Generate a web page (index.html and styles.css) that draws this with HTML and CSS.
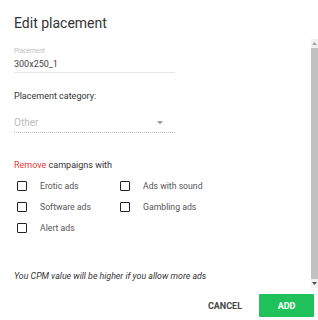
FILE: index.html
```html
<!DOCTYPE html>
<html>
<head>
<meta charset="utf-8">
<link rel="stylesheet" href="styles.css">
</head>
<body>
<div class="dialog">
  <h1 class="title">Edit placement</h1>
  <div class="body">
    <div class="inner">
      <div class="field">
        <div class="field-label">Placement</div>
        <div class="field-value">300x250_1</div>
      </div>
      <div class="section-label">Placement category:</div>
      <div class="select">
        <span>Other</span>
        <svg class="caret" width="6" height="4" viewBox="0 0 6 4"><path d="M0 0h6L3 3.5z" fill="#9e9e9e"/></svg>
      </div>
      <div class="remove"><span class="red">Remove</span> campaigns with</div>
      <div class="checks">
        <label class="check"><span class="box"></span>Erotic ads</label>
        <label class="check"><span class="box"></span>Ads with sound</label>
        <label class="check"><span class="box"></span>Software ads</label>
        <label class="check"><span class="box"></span>Gambling ads</label>
        <label class="check"><span class="box"></span>Alert ads</label>
      </div>
      <p class="note">You CPM value will be higher if you allow more ads</p>
    </div>
    <div class="scrollbar">
      <div class="sb-btn">
        <svg width="5" height="3" viewBox="0 0 5 3"><path d="M0 3h5L2.5 0z" fill="#a3a3a3"/></svg>
      </div>
      <div class="sb-thumb"></div>
      <div class="sb-btn">
        <svg width="5" height="3" viewBox="0 0 5 3"><path d="M0 0h5L2.5 3z" fill="#505050"/></svg>
      </div>
    </div>
  </div>
  <div class="actions">
    <button class="btn btn-text">CANCEL</button>
    <button class="btn btn-primary">ADD</button>
  </div>
</div>
</body>
</html>
```
FILE: styles.css
```css
html, body {
  margin: 0;
  padding: 0;
  background: #fff;
}
body {
  font-family: Roboto, "Liberation Sans", sans-serif;
  color: #333;
  width: 318px;
  height: 320px;
  overflow: hidden;
}
.dialog {
  display: flex;
  flex-direction: column;
  height: 320px;
}
.title {
  margin: 0;
  padding: 14px 14px 0 14px;
  height: 25px;
  font-size: 14px;
  line-height: 18px;
  font-weight: 400;
  color: #333;
}
.body {
  height: 249px;
  display: flex;
  overflow: hidden;
}
.inner {
  flex: 1;
  padding: 8px 0 0 14px;
}
.field, .select {
  width: 161px;
}
.scrollbar {
  width: 7px;
  flex: none;
  display: flex;
  flex-direction: column;
  background: #f1f1f1;
}
.sb-btn {
  height: 9px;
  display: flex;
  align-items: center;
  justify-content: center;
}
.sb-thumb {
  flex: 1;
  background: #c1c1c1;
}
.field-label {
  font-size: 6.5px;
  line-height: 8px;
  color: #bdbdbd;
}
.field-value {
  margin-top: 3px;
  font-size: 9px;
  line-height: 12px;
  color: #444;
  padding-bottom: 2px;
  border-bottom: 1px solid #e6e6e6;
}
.section-label {
  margin-top: 17px;
  font-size: 9px;
  line-height: 12px;
  color: #333;
}
.select {
  margin-top: 15px;
  display: flex;
  align-items: center;
  justify-content: space-between;
  font-size: 10px;
  line-height: 12px;
  color: #bdbdbd;
  padding-bottom: 3px;
  padding-right: 12px;
  box-sizing: border-box;
  border-bottom: 1px dotted #bdbdbd;
}
.remove {
  margin-top: 26px;
  font-size: 9px;
  line-height: 12px;
  color: #333;
}
.red {
  color: #e53935;
}
.checks {
  margin-top: 4px;
  width: 280px;
  display: grid;
  grid-template-columns: 103px 1fr;
  grid-auto-rows: 21px;
}
.check {
  display: flex;
  align-items: center;
  font-size: 8.7px;
  color: #555;
  padding-left: 3px;
}
.box {
  width: 8px;
  height: 8px;
  border: 1.5px solid #222;
  border-radius: 1px;
  margin-right: 13px;
  flex: none;
}
.note {
  margin: 32px 0 0 0;
  font-size: 8.8px;
  line-height: 12px;
  font-style: italic;
  color: #333;
}
.actions {
  display: flex;
  justify-content: flex-end;
  align-items: center;
  gap: 9px;
  margin-top: 6px;
  padding-right: 4px;
}
.btn {
  font-family: Roboto, "Liberation Sans", sans-serif;
  height: 23px;
  border: none;
  font-size: 9px;
  font-weight: 700;
  cursor: pointer;
}
.btn-text {
  background: transparent;
  color: #444;
  padding: 0 8px;
}
.btn-primary {
  background: #1fc15b;
  color: #fff;
  width: 55px;
  border-radius: 1px;
}
```
